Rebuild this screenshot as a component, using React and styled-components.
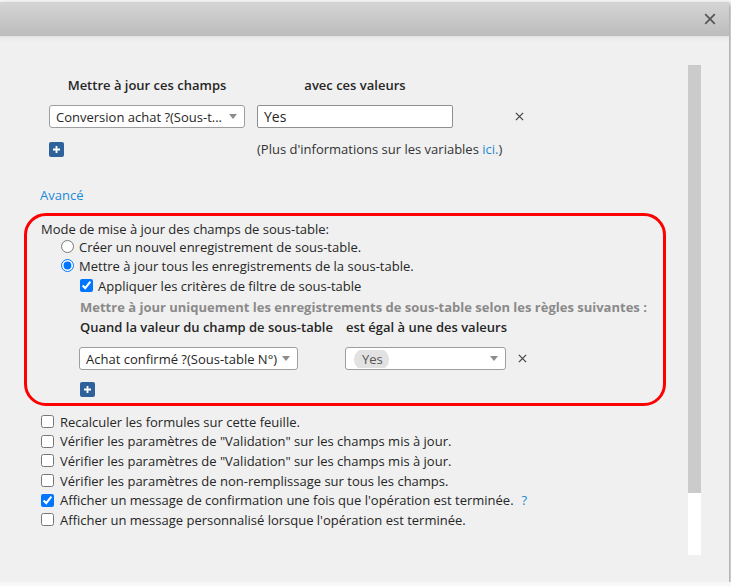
import React from 'react'
import styled, { createGlobalStyle } from 'styled-components'

const GlobalStyle = createGlobalStyle`
    html, body {
        margin: 0;
        padding: 0;
        background: #f7f7f7;
        font-family: 'Open Sans', 'Liberation Sans', sans-serif;
        font-size: 13px;
        color: #262626;
    }
`

const Modal = styled.div`
    margin-top: 2px;
    width: 729px;
    height: 580px;
    background: #f0f0f0;
    box-shadow: 1px 2px 4px rgba(0, 0, 0, 0.45);
    display: flex;
    flex-direction: column;
`

const Header = styled.div`
    height: 34px;
    flex: none;
    display: flex;
    align-items: center;
    justify-content: flex-end;
    padding-right: 13px;
    background: linear-gradient(#d5d5d5, #bcbcbc);
    border-bottom: 1px solid #e2e2e2;
`

const Body = styled.div`
    flex: 1;
    display: flex;
    background: linear-gradient(#e9e9e9 0, #f0f0f0 5px);
`

const Content = styled.div`
    flex: 1;
    padding: 39px 0 0 24px;
`

const ScrollTrack = styled.div`
    flex: none;
    width: 13px;
    height: 490px;
    margin: 28px 28px 0 0;
    background: linear-gradient(#cbcbcb 0, #cbcbcb 428px, #ffffff 428px);
`

const Fields = styled.div`
    padding-left: 25px;
`

const Grid = styled.div`
    display: grid;
    grid-template-columns: ${p => p.cols};
    column-gap: ${p => p.gap || '12px'};
    align-items: center;
    margin-top: ${p => p.top || '0'};
    padding-left: ${p => p.indent || '0'};
`

const ColLabel = styled.div`
    font-weight: 600;
    line-height: 18px;
    white-space: nowrap;
    text-align: ${p => (p.left ? 'left' : 'center')};
`

const SelectBox = styled.div`
    height: 23px;
    box-sizing: border-box;
    border: 1px solid #9e9e9e;
    border-radius: 3px;
    background: #fff;
    display: flex;
    align-items: center;
    padding: 0 7px 0 6px;
    white-space: nowrap;
    overflow: hidden;
`

const SelectText = styled.span`
    flex: 1;
    overflow: hidden;
`

const Caret = styled.span`
    flex: none;
    width: 0;
    height: 0;
    border-left: 4px solid transparent;
    border-right: 4px solid transparent;
    border-top: 5px solid #8c8c8c;
`

const Pill = styled.span`
    background: #e2e2e2;
    border-radius: 10px;
    padding: 1px 6px 2px 8px;
    margin-left: 2px;
    color: #555;
`

const TextInput = styled.div`
    height: 23px;
    box-sizing: border-box;
    border: 1px solid #8f8f8f;
    border-radius: 2px;
    background: #fff;
    padding: 0 6px;
    display: flex;
    align-items: center;
    font-size: 14px;
`

const RemoveBtn = styled.span`
    display: flex;
    margin-left: ${p => p.offset || '0'};
`

const PlusBtn = styled.span`
    width: 15px;
    height: 15px;
    border-radius: 2px;
    background: #2f629a;
    display: flex;
    align-items: center;
    justify-content: center;
`

const Info = styled.div`
    line-height: 18px;
    color: #333;
`

const Link = styled.span`
    color: #1c8ad9;
`

const Advanced = styled.div`
    color: #1c8ad9;
    line-height: 18px;
    margin: 28px 0 0 16px;
`

const RedBox = styled.div`
    width: 642px;
    box-sizing: border-box;
    margin-top: 9px;
    border: 3px solid #ff0000;
    border-radius: 22px;
    padding: 4px 0 6px 14px;
`

const Line = styled.div`
    display: flex;
    align-items: center;
    gap: 5px;
    height: ${p => p.h || '19px'};
    padding-left: ${p => p.indent || '0'};
    white-space: nowrap;
`

const GrayTitle = styled(Line)`
    font-weight: 700;
    color: #8a8a8a;
`

const Radio = styled.input.attrs({ type: 'radio' })`
    margin: 0;
    width: 13px;
    height: 13px;
`

const Check = styled.input.attrs({ type: 'checkbox' })`
    margin: 0;
    width: 13px;
    height: 13px;
`

const Options = styled.div`
    margin-top: 6px;
    padding-left: 17px;
`

const Help = styled.span`
    color: #1c8ad9;
    margin-left: 8px;
`

const Cross = ({ size = 10, color = '#444' }) => (
    <svg width={size} height={size} viewBox="0 0 10 10">
        <path d="M1 1 L9 9 M9 1 L1 9" stroke={color} strokeWidth="1.4" />
    </svg>
)

const Plus = () => (
    <PlusBtn>
        <svg width="9" height="9" viewBox="0 0 9 9">
            <path d="M4.5 1 V8 M1 4.5 H8" stroke="#fff" strokeWidth="1.8" />
        </svg>
    </PlusBtn>
)

const options = [
    { label: 'Recalculer les formules sur cette feuille.' },
    { label: 'Vérifier les paramètres de "Validation" sur les champs mis à jour.' },
    { label: 'Vérifier les paramètres de "Validation" sur les champs mis à jour.' },
    { label: 'Vérifier les paramètres de non-remplissage sur tous les champs.' },
    { label: "Afficher un message de confirmation une fois que l'opération est terminée.", checked: true, help: true },
    { label: "Afficher un message personnalisé lorsque l'opération est terminée." },
]

const App = () => {
    return (
        <>
            <GlobalStyle />
            <Modal>
                <Header>
                    <Cross size={12} color="#555" />
                </Header>
                <Body>
                    <Content>
                        <Fields>
                            <Grid cols="196px 196px">
                                <ColLabel>Mettre à jour ces champs</ColLabel>
                                <ColLabel>avec ces valeurs</ColLabel>
                            </Grid>
                            <Grid cols="196px 196px auto" top="11px">
                                <SelectBox>
                                    <SelectText>Conversion achat ?(Sous-t...</SelectText>
                                    <Caret />
                                </SelectBox>
                                <TextInput>Yes</TextInput>
                                <RemoveBtn offset="50px"><Cross size={9} /></RemoveBtn>
                            </Grid>
                            <Grid cols="196px 300px" top="12px">
                                <Plus />
                                <Info>(Plus d'informations sur les variables <Link>ici.</Link>)</Info>
                            </Grid>
                        </Fields>

                        <Advanced>Avancé</Advanced>

                        <RedBox>
                            <Line h="17px">Mode de mise à jour des champs de sous-table:</Line>
                            <Line indent="20px"><Radio readOnly /> Créer un nouvel enregistrement de sous-table.</Line>
                            <Line indent="20px"><Radio readOnly defaultChecked /> Mettre à jour tous les enregistrements de la sous-table.</Line>
                            <Line h="21px" indent="39px"><Check readOnly defaultChecked /> Appliquer les critères de filtre de sous-table</Line>
                            <GrayTitle h="22px" indent="39px">Mettre à jour uniquement les enregistrements de sous-table selon les règles suivantes :</GrayTitle>
                            <Grid cols="219px 161px auto" gap="47px" indent="39px">
                                <ColLabel left>Quand la valeur du champ de sous-table</ColLabel>
                                <ColLabel left>est égal à une des valeurs</ColLabel>
                            </Grid>
                            <Grid cols="219px 161px auto" gap="47px" top="11px" indent="38px">
                                <SelectBox>
                                    <SelectText>Achat confirmé ?(Sous-table N°)</SelectText>
                                    <Caret />
                                </SelectBox>
                                <SelectBox>
                                    <SelectText><Pill>Yes</Pill></SelectText>
                                    <Caret />
                                </SelectBox>
                                <RemoveBtn offset="-35px"><Cross size={9} /></RemoveBtn>
                            </Grid>
                            <Grid cols="auto" top="12px" indent="39px">
                                <Plus />
                            </Grid>
                        </RedBox>

                        <Options>
                            {options.map((o, i) => (
                                <Line key={i} h="19.6px" style={{ gap: 6 }}>
                                    <Check readOnly defaultChecked={!!o.checked} />
                                    <span>{o.label}{o.help && <Help>?</Help>}</span>
                                </Line>
                            ))}
                        </Options>
                    </Content>
                    <ScrollTrack />
                </Body>
            </Modal>
        </>
    )
}

export default App
